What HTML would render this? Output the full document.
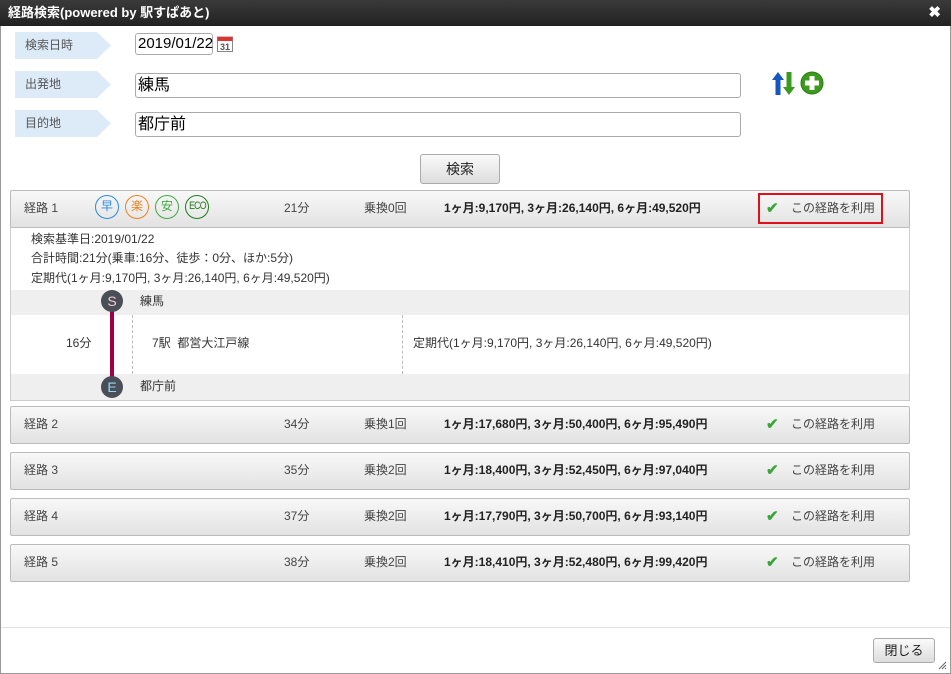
<!DOCTYPE html>
<html><head><meta charset="utf-8"><style>
*{box-sizing:border-box;margin:0;padding:0}
body{width:951px;height:674px;overflow:hidden;background:#fff;font-family:"Liberation Sans","Noto Sans CJK JP",sans-serif;font-size:12px;line-height:15px;color:#333;position:relative}
.frame{position:absolute;left:0;top:0;width:951px;height:674px;border:1px solid #999}
.title{position:absolute;left:0;top:0;width:951px;height:26px;background:linear-gradient(#3a3a3a,#222);color:#fff;font-weight:bold;font-size:13px;line-height:26px;padding-left:8px}
.x{position:absolute;right:10px;top:0;color:#fff;font-size:15px;font-weight:bold}
.a{position:absolute}
.lab{position:absolute;left:15px;width:96px;height:27px;background:#ddeaf8;clip-path:polygon(0 0,82px 0,96px 50%,82px 100%,0 100%);color:#555;font-size:12px;line-height:27px;padding-left:10px}
.inp{position:absolute;border:1px solid #aaa;border-radius:3px;background:#fff;font-size:16px;color:#000;padding-left:2px;line-height:20px}
.btn{position:absolute;border:1px solid #aaa;border-radius:3px;background:linear-gradient(#fafafa,#ddd);text-align:center;font-size:14px;color:#222}
.rh{position:absolute;left:10px;width:900px;height:38px;border:1px solid #bbb;border-radius:2px;background:linear-gradient(#f8f8f8,#e2e2e2);font-size:12px;color:#444}
.rh span{position:absolute;top:10px;line-height:15px}
.ic{position:absolute;top:4px;width:24px;height:24px;border:1.5px solid;border-radius:50%;text-align:center;line-height:21px;font-size:12px}
.rh span.chk{color:#3aa53a;font-size:15px;font-weight:bold;left:755px;top:10px}
</style></head><body>
<div class="frame"></div>
<div class="title">経路検索(powered by 駅すぱあと)<span class="x">✖</span></div>

<div class="lab" style="top:32px">検索日時</div>
<div class="lab" style="top:71px">出発地</div>
<div class="lab" style="top:110px">目的地</div>
<div class="inp" style="left:135px;top:33px;width:78px;height:22px;font-size:15px">2019/01/22</div>
<svg class="a" style="left:217px;top:35px" width="16" height="17" viewBox="0 0 16 17"><rect x="0.5" y="2" width="15" height="14.5" fill="#fff" stroke="#888"/><rect x="0.5" y="2" width="15" height="4" fill="#d33"/><text x="8" y="15" font-size="9" text-anchor="middle" fill="#555" font-family="Liberation Sans" font-weight="bold">31</text></svg>
<div class="inp" style="left:135px;top:73px;width:606px;height:25px;line-height:23px">練馬</div>
<div class="inp" style="left:135px;top:112px;width:606px;height:25px;line-height:23px">都庁前</div>
<svg class="a" style="left:772px;top:71px" width="24" height="25" viewBox="0 0 24 25"><path d="M6 1 L12 9 H8.5 V24 H3.5 V9 H0 Z" fill="#1657c2"/><path d="M17 24 L23 16 H19.5 V1 H14.5 V16 H11 Z" fill="#3a9a20"/></svg>
<svg class="a" style="left:800px;top:71px" width="24" height="24" viewBox="0 0 24 24"><circle cx="12" cy="12" r="11" fill="#3c9a1e" stroke="#2a7a10"/><path d="M9.5 5H14.5V9.5H19V14.5H14.5V19H9.5V14.5H5V9.5H9.5Z" fill="#fff"/></svg>
<div class="btn" style="left:420px;top:154px;width:80px;height:30px;line-height:28px">検索</div>

<div class="rh" style="top:190px">
<span style="left:13px">経路 1</span>
<div class="ic" style="left:84px;color:#2b8ae0;border-color:#2b8ae0">早</div>
<div class="ic" style="left:114px;color:#f0821e;border-color:#f0821e">楽</div>
<div class="ic" style="left:144px;color:#3fab3f;border-color:#3fab3f">安</div>
<div class="ic" style="left:174px;color:#1f7d1f;border-color:#1f7d1f;font-size:11px;letter-spacing:-1px"><span style="position:static;display:inline-block;transform:scaleX(0.8)">ECO</span></div>
<span style="left:273px">21分</span><span style="left:353px">乗換0回</span>
<span style="left:433px;font-weight:bold;color:#222">1ヶ月:9,170円, 3ヶ月:26,140円, 6ヶ月:49,520円</span>
<div class="a" style="left:747px;top:2px;width:125px;height:31px;border:2px solid #e0101a"></div>
<span class="chk">✔</span><span style="left:780px">この経路を利用</span>
</div>
<div class="a" style="left:10px;top:227px;width:900px;height:174px;border:1px solid #ccc;border-top:none;font-size:12px;color:#333">
<div class="a" style="left:20px;top:5px">検索基準日:2019/01/22</div>
<div class="a" style="left:20px;top:24px">合計時間:21分(乗車:16分、徒歩：0分、ほか:5分)</div>
<div class="a" style="left:20px;top:44px">定期代(1ヶ月:9,170円, 3ヶ月:26,140円, 6ヶ月:49,520円)</div>
<div class="a" style="left:0;top:63px;width:898px;height:25px;background:#efefef"></div>
<div class="a" style="left:0;top:147px;width:898px;height:26px;background:#efefef"></div>
<div class="a" style="left:129px;top:67px">練馬</div>
<div class="a" style="left:129px;top:152px">都庁前</div>
<div class="a" style="left:99px;top:74px;width:4px;height:87px;background:#a0004a"></div>
<div class="a" style="left:121px;top:88px;height:59px;border-left:1px dashed #bbb"></div>
<div class="a" style="left:391px;top:88px;height:59px;border-left:1px dashed #bbb"></div>
<div class="a" style="left:90px;top:63px;width:22px;height:22px;border-radius:50%;background:#4a4f57;color:#f4c8d0;text-align:center;line-height:22px;font-size:14px">S</div>
<div class="a" style="left:90px;top:149px;width:22px;height:22px;border-radius:50%;background:#4a4f57;color:#8fd8f0;text-align:center;line-height:22px;font-size:14px">E</div>
<div class="a" style="left:55px;top:109px">16分</div>
<div class="a" style="left:141px;top:109px">7駅&nbsp; 都営大江戸線</div>
<div class="a" style="left:402px;top:109px">定期代(1ヶ月:9,170円, 3ヶ月:26,140円, 6ヶ月:49,520円)</div>
</div>

<div class="rh" style="top:406px"><span style="left:13px">経路 2</span><span style="left:273px">34分</span><span style="left:353px">乗換1回</span><span style="left:433px;font-weight:bold;color:#222">1ヶ月:17,680円, 3ヶ月:50,400円, 6ヶ月:95,490円</span><span class="chk">✔</span><span style="left:780px">この経路を利用</span></div>
<div class="rh" style="top:452px"><span style="left:13px">経路 3</span><span style="left:273px">35分</span><span style="left:353px">乗換2回</span><span style="left:433px;font-weight:bold;color:#222">1ヶ月:18,400円, 3ヶ月:52,450円, 6ヶ月:97,040円</span><span class="chk">✔</span><span style="left:780px">この経路を利用</span></div>
<div class="rh" style="top:498px"><span style="left:13px">経路 4</span><span style="left:273px">37分</span><span style="left:353px">乗換2回</span><span style="left:433px;font-weight:bold;color:#222">1ヶ月:17,790円, 3ヶ月:50,700円, 6ヶ月:93,140円</span><span class="chk">✔</span><span style="left:780px">この経路を利用</span></div>
<div class="rh" style="top:544px"><span style="left:13px">経路 5</span><span style="left:273px">38分</span><span style="left:353px">乗換2回</span><span style="left:433px;font-weight:bold;color:#222">1ヶ月:18,410円, 3ヶ月:52,480円, 6ヶ月:99,420円</span><span class="chk">✔</span><span style="left:780px">この経路を利用</span></div>

<div class="a" style="left:1px;top:627px;width:949px;border-top:1px solid #e2e2e2"></div>
<div class="btn" style="left:873px;top:638px;width:62px;height:25px;line-height:23px;font-size:13px">閉じる</div>
<svg class="a" style="left:938px;top:661px" width="9" height="9"><path d="M8 1L1 8M8 4L4 8M8 7L7 8" stroke="#666"/></svg>
</body></html>
